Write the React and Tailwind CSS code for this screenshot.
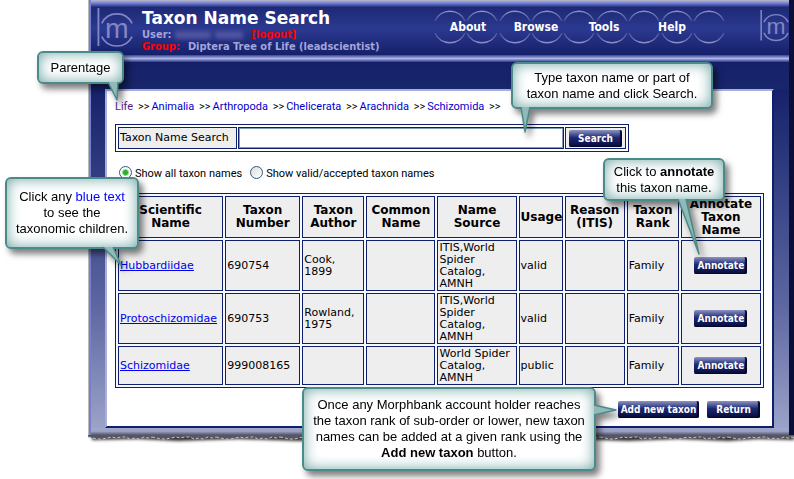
import React from "react";

const parents = [
  "Animalia",
  "Arthropoda",
  "Chelicerata",
  "Arachnida",
  "Schizomida",
];

const menu = ["About", "Browse", "Tools", "Help"];

const columns = [
  { title: "Scientific Name", width: "w-[105px]" },
  { title: "Taxon Number", width: "w-[75px]" },
  { title: "Taxon Author", width: "w-[62px]" },
  { title: "Common Name", width: "w-[69px]" },
  { title: "Name Source", width: "w-[79px]" },
  { title: "Usage", width: "w-[44px]" },
  { title: "Reason (ITIS)", width: "w-[60px]" },
  { title: "Taxon Rank", width: "w-[52px]" },
  { title: "Annotate Taxon Name", width: "w-[80px]" },
];

const taxa = [
  {
    name: "Hubbardiidae",
    number: "690754",
    author: "Cook, 1899",
    source: "ITIS,World Spider Catalog, AMNH",
    usage: "valid",
    rank: "Family",
    height: "h-[51px]",
  },
  {
    name: "Protoschizomidae",
    number: "690753",
    author: "Rowland, 1975",
    source: "ITIS,World Spider Catalog, AMNH",
    usage: "valid",
    rank: "Family",
    height: "h-[51px]",
  },
  {
    name: "Schizomidae",
    number: "999008165",
    author: "",
    source: "World Spider Catalog, AMNH",
    usage: "public",
    rank: "Family",
    height: "h-[39px]",
  },
];

function Logo({ className }) {
  return (
    <svg className={className} viewBox="0 0 38 42" fill="none" aria-hidden="true">
      <path d="M1.500 0v40" stroke="#8286c4" strokeWidth="2" />
      <path d="M5 16a17.800 17.800 0 0 1 32 0M5 30a17.800 17.800 0 0 0 32 0" stroke="#8286c4" strokeWidth="1.800" />
      <text x="21" y="32" textAnchor="middle" fontSize="30" fontFamily="Liberation Sans, sans-serif" fill="#8286c4">
        m
      </text>
    </svg>
  );
}

function Rings() {
  const centers = [16, 48, 81, 113, 145, 178, 210, 243, 275];
  return (
    <svg className="absolute left-0 top-0 w-[292px] h-[36px]" viewBox="0 0 292 36" fill="none" aria-hidden="true">
      <defs>
        <linearGradient id="ring" x1="0" y1="0" x2="0" y2="36" gradientUnits="userSpaceOnUse">
          <stop offset="0" stopColor="#a29bd0" />
          <stop offset="0.36" stopColor="#a29bd0" stopOpacity="0.2" />
          <stop offset="0.64" stopColor="#a29bd0" stopOpacity="0.2" />
          <stop offset="1" stopColor="#a29bd0" />
        </linearGradient>
      </defs>
      {centers.map((x) => (
        <path
          key={x}
          d={`M${x - 15} 12a16.500 16.500 0 0 1 30 0M${x - 15} 24a16.500 16.500 0 0 0 30 0`}
          stroke="url(#ring)"
          strokeWidth="1.500"
        />
      ))}
    </svg>
  );
}

function Button({ children, className = "" }) {
  return (
    <button
      type="button"
      className={`h-[17px] rounded-xs bg-linear-to-b from-[#8f94c4] via-[#1f2872] via-45% to-[#070b3c] shadow-[inset_-2px_-1px_1px_#05082c] text-white font-bold text-[10px] leading-[15px] font-['DejaVu_Sans_Condensed','Noto_Sans',sans-serif] whitespace-nowrap ${className}`}
    >
      {children}
    </button>
  );
}

// tail is drawn in the callout's own coordinates, starting on the inner side of the border
function Callout({ className, tail, children }) {
  return (
    <div className={`absolute drop-shadow-[4px_5px_3px_rgba(0,0,0,0.5)] ${className}`}>
      <div className="flex h-full items-center justify-center rounded-md border-2 border-[#4a8a88] bg-white shadow-[inset_0_0_14px_#6fa5a3] text-center text-[13px] leading-4 text-black font-['Liberation_Sans',sans-serif] whitespace-nowrap">
        <p>{children}</p>
      </div>
      <svg className="absolute left-0 top-0 w-full h-full overflow-visible" aria-hidden="true">
        <path d={tail} fill="#8fbab8" stroke="#4a8a88" strokeWidth="1.500" strokeLinejoin="round" />
      </svg>
    </div>
  );
}

function Header() {
  return (
    <header>
      <div className="h-[7px] bg-linear-to-b from-[#b9b9c0] via-[#7d86dc] via-40% to-[#26327f]" />
      <div className="flex h-12 items-start bg-linear-to-b from-[#1d2975] via-[#2b3990] via-45% to-[#16206a]">
        <Logo className="ml-[6px] mt-px w-[36px] h-[40px] shrink-0" />
        <div className="ml-[9px] mt-px font-['DejaVu_Sans_Condensed','Noto_Sans',sans-serif] font-bold text-[11px] leading-3 text-[#a3a5dc] whitespace-nowrap">
          <h1 className="font-['DejaVu_Sans',sans-serif] text-[17px] leading-[21px] text-white">
            Taxon Name Search
          </h1>
          <div className="flex">
            User:
            <span className="mx-1 flex items-center gap-1 blur-[2px]">
              <span className="h-2 w-9 bg-[#5054a0]" />
              <span className="h-2 w-7 bg-[#5054a0]" />
            </span>
            <a href="#logout" className="ml-1 text-[#ff0000]">
              [logout]
            </a>
          </div>
          <div>
            <span className="mr-2 text-[#ff0000]">Group:</span>
            Diptera Tree of Life (leadscientist)
          </div>
        </div>
        <nav className="relative ml-auto mt-[2px] h-[36px] w-[292px] shrink-0">
          <Rings />
          <ul className="relative grid h-full w-[272px] grid-cols-4 items-center text-center font-['DejaVu_Sans_Condensed','Noto_Sans',sans-serif] text-xs font-bold text-white">
            {menu.map((item) => (
              <li key={item}>
                <a href={`#${item}`}>{item}</a>
              </li>
            ))}
          </ul>
        </nav>
        <Logo className="ml-[34px] mt-[3px] w-[29px] h-[32px] shrink-0" />
      </div>
      <div className="h-[7px] bg-linear-to-b from-[#3a4590] via-[#b0b6ea] to-[#2e3a86]" />
    </header>
  );
}

function SearchForm() {
  const cell = "border border-[#0f1f6b] bg-[#eeeeee]";
  return (
    <form onSubmit={(e) => e.preventDefault()}>
      <div className="flex h-7 w-[514px] gap-px border border-[#0f1f6b] p-[2px]">
        <label htmlFor="taxon" className={`${cell} w-[119px] pl-px text-[11px] leading-5 whitespace-nowrap`}>
          Taxon Name Search
        </label>
        <div className={`${cell} flex-1`}>
          <input id="taxon" type="text" className="block h-full w-full border border-[#7f9db9] bg-white px-1 text-[11px] outline-none" />
        </div>
        <div className={`${cell} flex w-[61px] items-center justify-center`}>
          <Button className="w-[53px]">Search</Button>
        </div>
      </div>
      <div className="mt-[13px] flex items-center gap-2 pl-1 text-[11px] leading-[18px] font-[Roboto,'DejaVu_Sans',sans-serif]">
        <label className="flex items-end gap-[3px]">
          <input
            type="radio"
            name="show"
            defaultChecked
            className="mb-1 size-[13px] appearance-none rounded-full border border-[#33597f] bg-white checked:bg-[radial-gradient(circle,#2bb02b_0_2px,#ffffff_4px)]"
          />
          Show all taxon names
        </label>
        <label className="flex items-end gap-[3px]">
          <input
            type="radio"
            name="show"
            className="mb-1 size-[13px] appearance-none rounded-full border border-[#33597f] bg-linear-to-br from-[#dcdcd8] to-white checked:bg-[radial-gradient(circle,#2bb02b_0_2px,#ffffff_4px)]"
          />
          Show valid/accepted taxon names
        </label>
      </div>
    </form>
  );
}

function TaxonTable() {
  const cell = "border border-[#0f1f6b] bg-[#eeeeee] px-px py-0";
  return (
    <table className="mt-[10px] w-full table-fixed border-separate border-spacing-[2px] border border-[#0f1f6b] bg-[#f6f8ff] text-[11px] leading-3">
      <thead>
        <tr className="h-[42px] text-xs leading-[13px]">
          {columns.map((col) => (
            <th key={col.title} className={`${cell} ${col.width}`}>
              {col.title}
            </th>
          ))}
        </tr>
      </thead>
      <tbody>
        {taxa.map((taxon) => (
          <tr key={taxon.name} className={taxon.height}>
            <td className={cell}>
              <a href={`#${taxon.name}`} className="text-[#0000ee] underline">
                {taxon.name}
              </a>
            </td>
            <td className={cell}>{taxon.number}</td>
            <td className={cell}>{taxon.author}</td>
            <td className={cell}></td>
            <td className={cell}>{taxon.source}</td>
            <td className={cell}>{taxon.usage}</td>
            <td className={cell}></td>
            <td className={cell}>{taxon.rank}</td>
            <td className={`${cell} text-center`}>
              <Button className="w-[53px]">Annotate</Button>
            </td>
          </tr>
        ))}
      </tbody>
    </table>
  );
}

function TornEdge() {
  return (
    <svg className="block h-[9px] w-full" viewBox="0 0 706 9" preserveAspectRatio="none" aria-hidden="true">
      <defs>
        <filter id="soft" x="-5%" y="-50%" width="110%" height="220%">
          <feGaussianBlur stdDeviation="1.500" />
        </filter>
        <pattern id="torn" width="64" height="9" patternUnits="userSpaceOnUse">
          <path d="M0 0H64V2L60 3L56 2L51 4L47 3L42 4L38 2L33 2L28 3L24 2L19 3L14 4L9 4L5 3L0 2Z" fill="#55565f" />
          <path d="M0 2L5 3L9 4L14 4L19 3L24 2L28 3L33 2L38 2L42 4L47 3L51 4L56 2L60 3L64 2" fill="none" stroke="#c4c4c8" strokeDasharray="3 2" />
        </pattern>
      </defs>
      <path d="M4 0H706V5L670 4L640 6L590 4L540 6L480 4L430 6L380 4L330 6L270 4L210 6L150 4L90 6L50 4L4 5Z" fill="#333" filter="url(#soft)" />
      <rect width="706" height="5" fill="url(#torn)" />
    </svg>
  );
}

export default function App() {
  return (
    <div className="relative min-w-[780px] bg-white pb-9 pl-[88px] text-black font-['DejaVu_Sans',Verdana,sans-serif]">
      <div className="border-l border-[#b9b9b9] bg-[#17216a]">
        <div className="border-l-2 border-r-[5px] border-l-[#7580cc] border-r-[#0b0f38] bg-linear-to-b from-[#16206a] from-20% via-[#5d66a0] via-70% to-[#9fa6ca]">
          <Header />
          <div className="h-[27px] bg-linear-to-b from-[#16206a] to-[#18266a]" />
          <div className="ml-[14px] mr-[15px] border-2 border-t-[#a9aede] border-l-[#a9aede] border-r-[#0f1f6b] border-b-[#0f1f6b] bg-white px-2">
            <p className="pt-2 pb-[9px] text-[11px] leading-4 font-[Roboto,'DejaVu_Sans',sans-serif]">
              <a href="#Life" className="text-[#551a8b]">
                Life
              </a>{" "}
              <span className="mx-[2px]">&gt;&gt;</span>
              {parents.map((name) => (
                <React.Fragment key={name}>
                  <a href={`#${name}`} className="text-[#0000cc]">
                    {name}
                  </a>{" "}
                  <span className="mx-[2px]">&gt;&gt;</span>
                </React.Fragment>
              ))}
            </p>
            <SearchForm />
            <TaxonTable />
            <div className="flex justify-end gap-2 pt-[13px] pb-2 pr-1">
              <Button className="w-[81px]">Add new taxon</Button>
              <Button className="w-[53px]">Return</Button>
            </div>
          </div>
          <div className="h-[7px] bg-linear-to-b from-[#a3a9cc] via-[#9a9fc4] to-[#55556c]" />
        </div>
      </div>
      <TornEdge />

      <Callout className="left-[37px] top-[51px] w-[87px] h-[33px]" tail="M71 31L80 49L81 31">
        Parentage
      </Callout>
      <Callout className="left-[511px] top-[62px] w-[202px] h-[47px]" tail="M10 45L14 70L19 45">
        Type taxon name or part of
        <br />
        taxon name and click Search.
      </Callout>
      <Callout className="left-[603px] top-[158px] w-[122px] h-[43px]" tail="M75 41L96 96L83 41">
        Click to <b>annotate</b>
        <br />
        this taxon name.
      </Callout>
      <Callout className="left-[5px] top-[177px] w-[134px] h-[72px]" tail="M98 70L116 88L108 70">
        Click any <span className="text-[#0000ff]">blue text</span>
        <br />
        to see the
        <br />
        taxonomic children.
      </Callout>
      <Callout className="left-[302px] top-[387px] w-[294px] h-[84px]" tail="M292 18L314 23L292 28">
        Once any Morphbank account holder reaches
        <br />
        the taxon rank of sub-order or lower, new taxon
        <br />
        names can be added at a given rank using the
        <br />
        <b>Add new taxon</b> button.
      </Callout>
    </div>
  );
}
